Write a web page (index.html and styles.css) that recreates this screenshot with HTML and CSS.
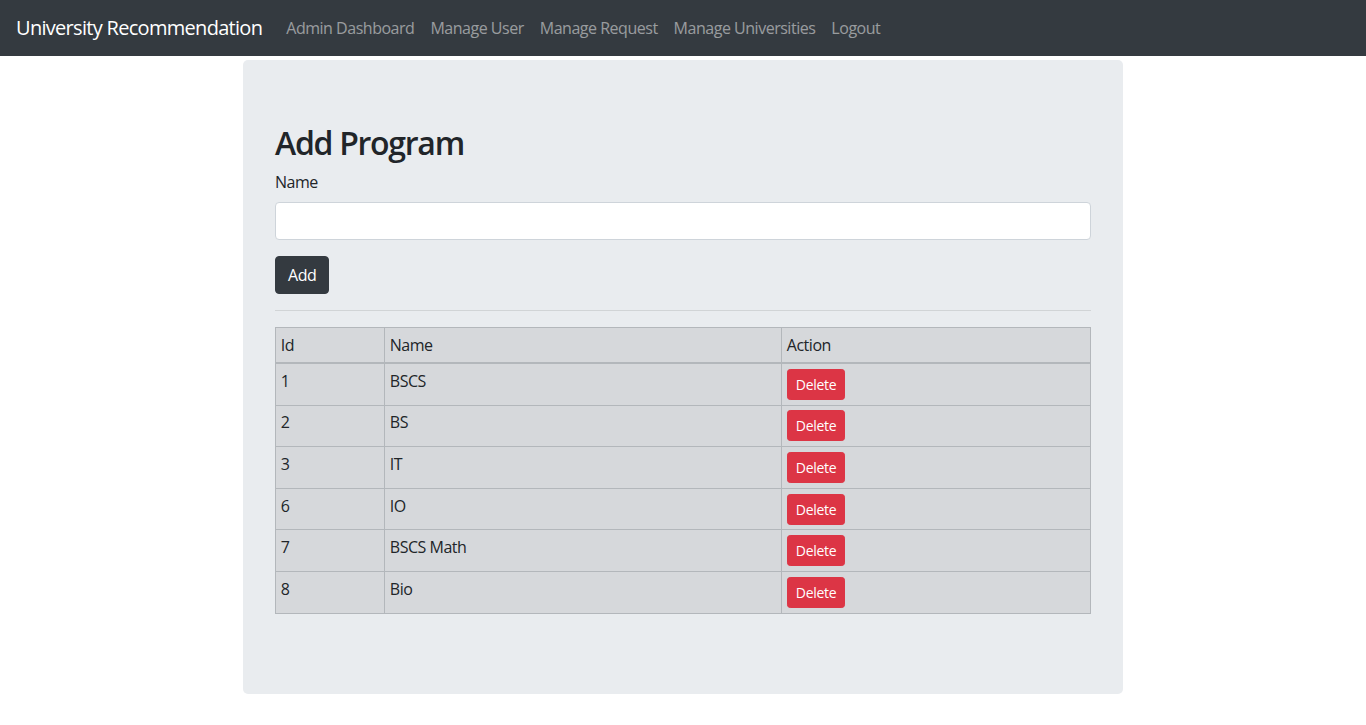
FILE: index.html
```html
<!DOCTYPE html>
<html>
<head>
<meta charset="utf-8">
<title>Add Program</title>
<link rel="stylesheet" href="styles.css">
</head>
<body>
<nav class="navbar">
  <a class="brand" href="#">University Recommendation</a>
  <ul class="nav-links">
    <li><a href="#">Admin Dashboard</a></li>
    <li><a href="#">Manage User</a></li>
    <li><a href="#">Manage Request</a></li>
    <li><a href="#">Manage Universities</a></li>
    <li><a href="#">Logout</a></li>
  </ul>
</nav>
<main class="jumbotron">
  <h2 class="title">Add Program</h2>
  <form class="add-form">
    <label class="field-label" for="name">Name</label>
    <input class="field-input" id="name" type="text">
    <button class="btn btn-dark" type="button">Add</button>
  </form>
  <hr class="divider">
  <table class="programs">
    <colgroup>
      <col class="col-id">
      <col class="col-name">
      <col class="col-action">
    </colgroup>
    <thead>
      <tr><th>Id</th><th>Name</th><th>Action</th></tr>
    </thead>
    <tbody>
      <tr><td>1</td><td>BSCS</td><td><button class="btn-del" type="button">Delete</button></td></tr>
      <tr><td>2</td><td>BS</td><td><button class="btn-del" type="button">Delete</button></td></tr>
      <tr><td>3</td><td>IT</td><td><button class="btn-del" type="button">Delete</button></td></tr>
      <tr><td>6</td><td>IO</td><td><button class="btn-del" type="button">Delete</button></td></tr>
      <tr><td>7</td><td>BSCS Math</td><td><button class="btn-del" type="button">Delete</button></td></tr>
      <tr><td>8</td><td>Bio</td><td><button class="btn-del" type="button">Delete</button></td></tr>
    </tbody>
  </table>
</main>
</body>
</html>
```

FILE: styles.css
```css
* { box-sizing: border-box; }
html, body { margin: 0; padding: 0; }
body {
  font-family: "Open Sans", "Noto Sans", "Liberation Sans", sans-serif;
  font-size: 16px;
  line-height: 1.5;
  letter-spacing: -0.03em;
  color: #212529;
  background: #fff;
}
.navbar {
  height: 56px;
  background: #343a40;
  display: flex;
  align-items: center;
  padding: 0 16px;
}
.brand {
  color: #fff;
  font-size: 20px;
  line-height: 30px;
  letter-spacing: -0.035em;
  text-decoration: none;
  margin-right: 16px;
  white-space: nowrap;
}
.nav-links {
  list-style: none;
  margin: 0;
  padding: 0;
  display: flex;
}
.nav-links a {
  display: block;
  padding: 8px;
  color: rgba(255,255,255,.5);
  text-decoration: none;
  line-height: 24px;
}
.jumbotron {
  width: 880px;
  margin: 4px auto 0;
  background: #e9ecef;
  border-radius: 5px;
  padding: 64px 32px;
}
.title {
  margin: 0 0 8px;
  font-size: 32px;
  line-height: 38.4px;
  font-weight: 600;
  letter-spacing: -0.04em;
}
.add-form { display: flex; flex-direction: column; align-items: flex-start; }
.field-label { display: block; margin-bottom: 8px; }
.field-input {
  width: 100%;
  height: 38px;
  border: 1px solid #ced4da;
  border-radius: 4px;
  background: #fff;
  padding: 6px 12px;
  font: inherit;
  margin-bottom: 16px;
}
.btn {
  font: inherit;
  letter-spacing: inherit;
  line-height: 24px;
  padding: 6px 12px;
  border: 1px solid transparent;
  border-radius: 4px;
  cursor: pointer;
}
.btn-dark { background: #343a40; border-color: #343a40; color: #fff; }
.divider {
  margin: 16px 0;
  border: 0;
  border-top: 1px solid rgba(0,0,0,.1);
}
.programs {
  width: 100%;
  border-collapse: collapse;
  background: #d6d8db;
  table-layout: fixed;
  margin-bottom: 16px;
}
.col-id { width: 109px; }
.col-name { width: 397px; }
.programs th, .programs td {
  border: 1px solid #b3b7bb;
  padding: 4.8px;
  text-align: left;
  vertical-align: top;
  font-weight: 400;
}
.programs thead th { border-bottom-width: 2px; }
.btn-del {
  font: inherit;
  letter-spacing: -0.02em;
  font-size: 14px;
  line-height: 21px;
  padding: 4px 8px;
  border: 1px solid #dc3545;
  background: #dc3545;
  color: #fff;
  border-radius: 3.2px;
  cursor: pointer;
}
```
